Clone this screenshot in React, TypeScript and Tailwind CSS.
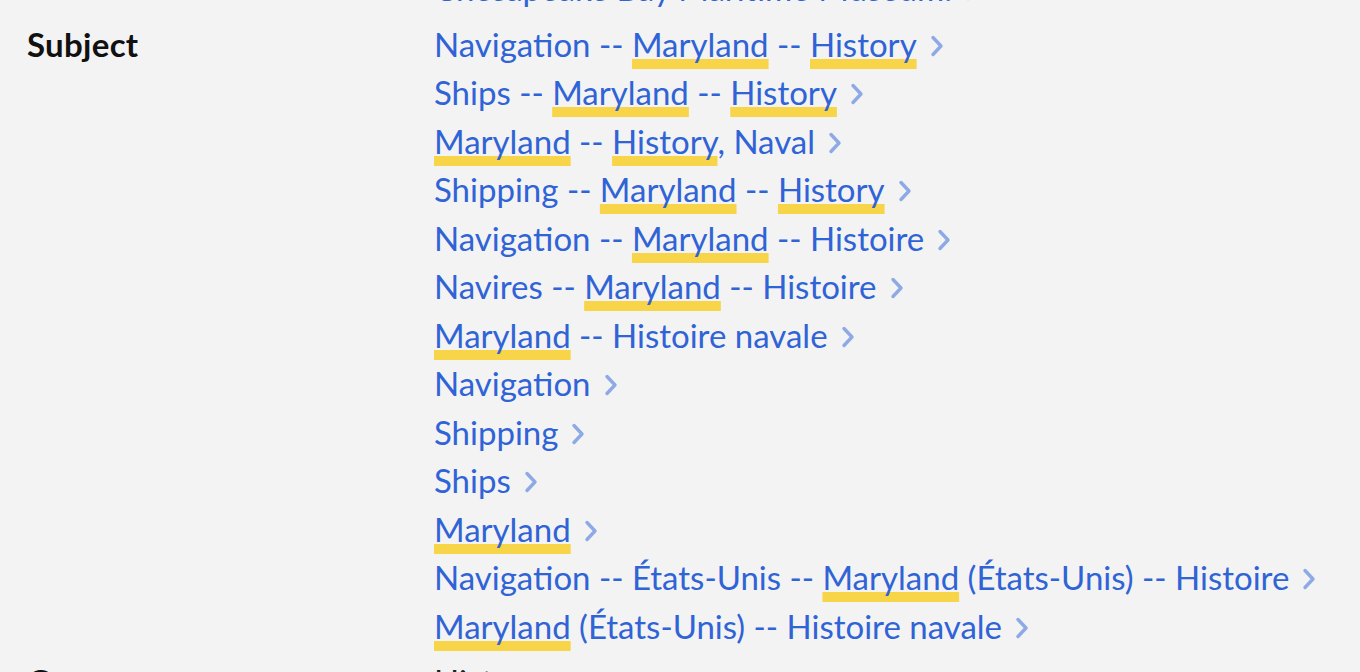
import React from "react"

type Part = string | { hl: string }

const subjects: Part[][] = [
  ["Navigation -- ", { hl: "Maryland" }, " -- ", { hl: "History" }],
  ["Ships -- ", { hl: "Maryland" }, " -- ", { hl: "History" }],
  [{ hl: "Maryland" }, " -- ", { hl: "History" }, ", Naval"],
  ["Shipping -- ", { hl: "Maryland" }, " -- ", { hl: "History" }],
  ["Navigation -- ", { hl: "Maryland" }, " -- Histoire"],
  ["Navires -- ", { hl: "Maryland" }, " -- Histoire"],
  [{ hl: "Maryland" }, " -- Histoire navale"],
  ["Navigation"],
  ["Shipping"],
  ["Ships"],
  [{ hl: "Maryland" }],
  ["Navigation -- États-Unis -- ", { hl: "Maryland" }, " (États-Unis) -- Histoire"],
  [{ hl: "Maryland" }, " (États-Unis) -- Histoire navale"],
]

const Chevron = () => (
  <svg width="14" height="22" viewBox="0 0 14 22" className="ml-[13px] mt-[4px] shrink-0">
    <polyline
      points="3,2.5 11,11 3,19.5"
      fill="none"
      stroke="#8eaae6"
      strokeWidth="3.4"
      strokeLinecap="round"
      strokeLinejoin="round"
    />
  </svg>
)

const LinkRow = ({ parts }: { parts: Part[] }) => (
  <a href="#" className="flex items-center text-[#2f63d6] whitespace-pre">
    <span>
      {parts.map((p, i) =>
        typeof p === "string" ? (
          <span key={i}>{p}</span>
        ) : (
          <span
            key={i}
            className="underline decoration-[#f8d548] decoration-[10px] underline-offset-[2px] [text-decoration-skip-ink:none]"
          >
            {p.hl}
          </span>
        )
      )}
    </span>
    <Chevron />
  </a>
)

const Field = ({ label, children }: { label: string; children: React.ReactNode }) => (
  <div className="grid grid-cols-[407px_1fr]">
    <div className="font-bold text-[#111] tracking-[0.3px]">{label}</div>
    <div className="flex flex-col">{children}</div>
  </div>
)

export default function App() {
  return (
    <div className="min-h-screen h-[672px] overflow-hidden bg-[#f3f3f3] font-['Lato',sans-serif] text-[33px] leading-[48.5px]">
      <div className="-mt-[36px] pl-[27px] flex flex-col gap-[7px]">
        <Field label="">
          <LinkRow parts={["Chesapeake Bay Maritime Museum."]} />
        </Field>
        <Field label="Subject">
          {subjects.map((s, i) => (
            <LinkRow key={i} parts={s} />
          ))}
        </Field>
        <Field label="Genre">
          <div className="text-[#222]">History</div>
        </Field>
      </div>
    </div>
  )
}
